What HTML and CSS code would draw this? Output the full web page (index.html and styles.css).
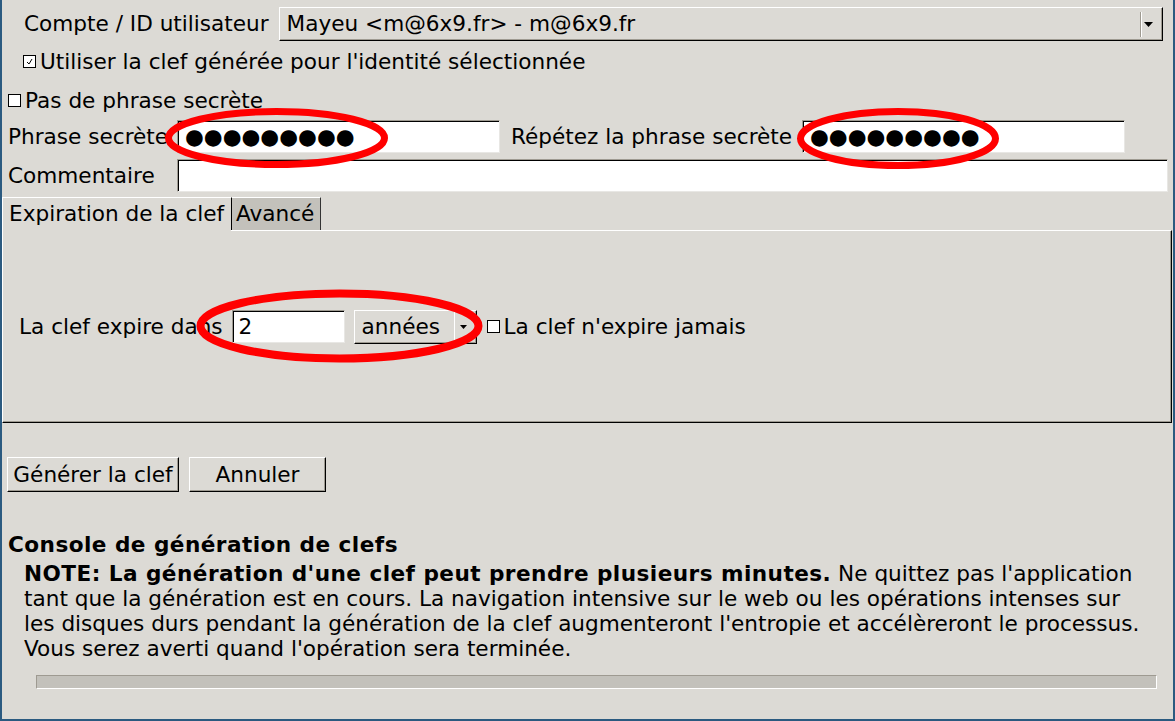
FILE: index.html
```html
<!DOCTYPE html>
<html lang="fr">
<head>
<meta charset="utf-8">
<title>Génération de clef</title>
<link rel="stylesheet" href="styles.css">
</head>
<body>
<div class="window">
  <div class="row-account">
    <span class="account-label">Compte / ID utilisateur</span>
    <div class="combo combo-wide">
      <span class="combo-text">Mayeu &lt;m@6x9.fr&gt; - m@6x9.fr</span>
      <span class="combo-btn"><svg width="9" height="5" viewBox="0 0 9 5"><polygon points="0,0 9,0 4.5,5" fill="#000"/></svg></span>
    </div>
  </div>

  <div class="check check-identity">
    <span class="box"><svg width="11" height="11" viewBox="0 0 11 11"><polyline points="3,6 5,8 8,3" fill="none" stroke="#000" stroke-width="1"/></svg></span>
    <span>Utiliser la clef générée pour l'identité sélectionnée</span>
  </div>

  <div class="check check-nopass">
    <span class="box"></span>
    <span>Pas de phrase secrète</span>
  </div>

  <div class="row-pass">
    <span class="field-label">Phrase secrète</span>
    <div class="entry entry-pass"><span class="dots">●●●●●●●●●</span></div>
    <span class="repeat-label">Répétez la phrase secrète</span>
    <div class="entry entry-pass entry-repeat"><span class="dots">●●●●●●●●●</span></div>
  </div>

  <div class="row-comment">
    <span class="field-label">Commentaire</span>
    <div class="entry entry-comment"></div>
  </div>

  <div class="tabs">
    <div class="tab tab-active">Expiration de la clef</div>
    <div class="tab tab-inactive">Avancé</div>
  </div>
  <div class="panel">
    <span class="expire-label">La clef expire dans</span>
    <div class="entry entry-num"><span class="entry-text">2</span></div>
    <div class="combo combo-unit">
      <span class="combo-text">années</span>
      <span class="unit-btn"><svg width="7" height="4" viewBox="0 0 7 4"><polygon points="0,0 7,0 3.5,4" fill="#000"/></svg></span>
    </div>
    <span class="box box-never"></span>
    <span class="never-label">La clef n'expire jamais</span>
  </div>

  <div class="buttons">
    <div class="btn btn-generate">Générer la clef</div>
    <div class="btn btn-cancel">Annuler</div>
  </div>

  <div class="console-title">Console de génération de clefs</div>
  <p class="note"><b>NOTE: La génération d'une clef peut prendre plusieurs minutes.</b> Ne quittez pas l'application tant que la génération est en cours. La navigation intensive sur le web ou les opérations intenses sur les disques durs pendant la génération de la clef augmenteront l'entropie et accélèreront le processus. Vous serez averti quand l'opération sera terminée.</p>
  <div class="progress"></div>
</div>

<svg class="marks" width="1175" height="721" viewBox="0 0 1175 721">
  <ellipse cx="276.5" cy="138" rx="108" ry="26.5" fill="none" stroke="#ff0000" stroke-width="7"/>
  <ellipse cx="898" cy="138.5" rx="97.5" ry="27" fill="none" stroke="#ff0000" stroke-width="7"/>
  <ellipse cx="339.5" cy="326" rx="139" ry="32.5" fill="none" stroke="#ff0000" stroke-width="8"/>
</svg>
</body>
</html>
```

FILE: styles.css
```css
* { box-sizing: border-box; }

body {
  margin: 0;
  background: #dcdad5;
  font-family: "DejaVu Sans", sans-serif;
  font-size: 21.6px;
  color: #000;
}

b, .console-title {
  font-weight: bold;
  letter-spacing: 0.45px;
}

.window {
  width: 1175px;
  height: 721px;
  border-left: 2px solid #2b5a80;
  border-right: 2px solid #2b5a80;
  border-bottom: 2px solid #2b5a80;
  background: #dcdad5;
  overflow: hidden;
}

/* account row */
.row-account {
  display: flex;
  align-items: center;
  margin-top: 7px;
  height: 34px;
  padding-left: 22px;
  padding-right: 10px;
}
.account-label {
  line-height: 34px;
  margin-right: 10px;
  white-space: nowrap;
}
.combo {
  display: flex;
  height: 34px;
  border: 1px solid;
  border-color: #fff #000 #000 #fff;
  box-shadow: inset -1px -1px 0 #9e9a91;
  background: #dcdad5;
}
.combo-wide { flex: 1; }
.combo-text {
  flex: 1;
  line-height: 32px;
  padding-left: 7px;
  white-space: nowrap;
}
.combo-btn {
  width: 20px;
  margin: 4px 1px 3px 0;
  border-left: 1px solid #fff;
  box-shadow: -1px 0 0 #9e9a91;
  display: flex;
  align-items: center;
  padding-left: 2px;
}

/* checkbuttons */
.check {
  display: flex;
  align-items: center;
  line-height: 25px;
  white-space: nowrap;
}
.box {
  width: 13px;
  height: 13px;
  border: 1px solid #000;
  background: #fff;
  display: flex;
  flex: none;
}
.check-identity {
  margin-top: 8px;
  padding-left: 21px;
}
.check-identity .box { margin-right: 4px; }
.check-nopass {
  margin-top: 14px;
  padding-left: 6px;
}
.check-nopass .box { margin-right: 4px; }

/* entries */
.entry {
  height: 33px;
  background: #fff;
  border: 1px solid;
  border-color: #9e9a91 #e8e7e4 #e8e7e4 #9e9a91;
  box-shadow: inset 1px 1px 0 #000;
  display: flex;
  align-items: center;
}
.row-pass, .row-comment {
  display: flex;
  align-items: center;
  height: 33px;
}
.row-pass { margin-top: 7px; }
.row-comment { margin-top: 6px; }
.field-label {
  width: 175px;
  padding-left: 6px;
  line-height: 25px;
  white-space: nowrap;
  flex: none;
}
.entry-pass { width: 323px; flex: none; }
.entry-repeat { margin-right: 48px; }
.repeat-label {
  flex: 1;
  margin-left: 11px;
  line-height: 25px;
  white-space: nowrap;
}
.entry-comment { flex: 1; margin-right: 5px; }
.dots {
  padding-left: 7px;
  line-height: 31px;
  white-space: nowrap;
}

/* tabs */
.tabs {
  display: flex;
  margin-top: 5px;
  height: 33px;
}
.tab {
  line-height: 31px;
  white-space: nowrap;
  border-top: 1px solid #fff;
}
.tab-active {
  width: 229px;
  padding-left: 6px;
  border-left: 1px solid #fff;
  background: #dcdad5;
  height: 34px;
  position: relative;
  z-index: 1;
}
.tab-inactive {
  width: 90px;
  padding-left: 4px;
  background: #c3c1bb;
  border-left: 1px solid #000;
  border-right: 1px solid #333;
}

.panel {
  height: 193px;
  margin-right: 1px;
  border: 1px solid;
  border-color: #fff #000 #000 #fff;
  box-shadow: inset -1px -1px 0 #9e9a91;
  display: flex;
  align-items: center;
  padding-left: 16px;
}
.expire-label {
  line-height: 25px;
  white-space: nowrap;
}
.entry-num {
  width: 113px;
  margin-left: 9px;
}
.entry-text { padding-left: 6px; line-height: 31px; }
.combo-unit {
  width: 123px;
  height: 34px;
  margin-left: 9px;
}
.unit-btn {
  width: 22px;
  border-left: 1px solid #fff;
  display: flex;
  align-items: center;
  padding-left: 5px;
}
.box-never { margin-left: 10px; margin-right: 4px; }
.never-label {
  line-height: 25px;
  white-space: nowrap;
}

/* buttons */
.buttons {
  display: flex;
  margin-top: 34px;
  padding-left: 5px;
}
.btn {
  height: 35px;
  line-height: 33px;
  text-align: center;
  border: 1px solid;
  border-color: #fff #000 #000 #fff;
  box-shadow: inset -1px -1px 0 #9e9a91;
  background: #dcdad5;
  white-space: nowrap;
}
.btn-generate { width: 172px; }
.btn-cancel { width: 137px; margin-left: 10px; }

.console-title {
  margin-top: 40px;
  padding-left: 6px;
  line-height: 25px;
}
.note {
  margin: 4px 0 0 0;
  padding-left: 22px;
  width: 1153px;
  line-height: 25px;
}
.progress {
  margin-top: 14px;
  margin-left: 34px;
  width: 1121px;
  height: 14px;
  background: #c3c1bb;
  border: 1px solid;
  border-color: #9e9a91 #fff #fff #9e9a91;
}

.marks {
  position: absolute;
  top: 0;
  left: 0;
  pointer-events: none;
}
```
